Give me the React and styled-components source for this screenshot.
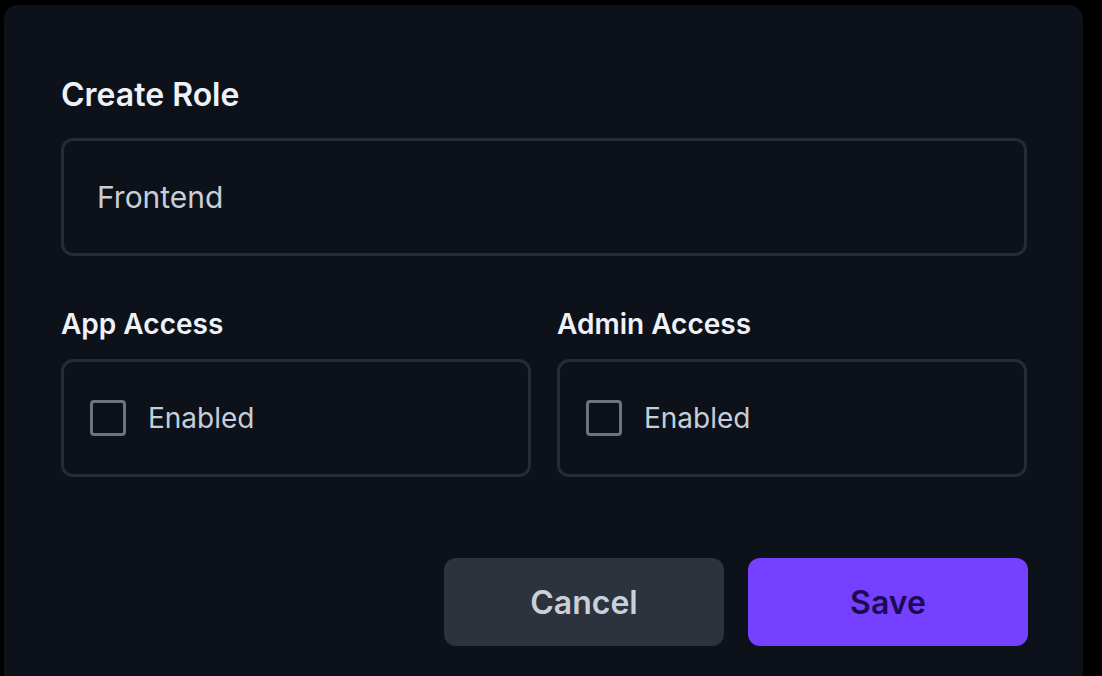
import styled, { createGlobalStyle } from "styled-components";
import { useState } from "react";

const GlobalStyle = createGlobalStyle`
html, body {
  margin : 0;
  padding : 0;
  background-color : #000000;
  font-family : Inter, "Noto Sans", sans-serif;
}
`

const Panel = styled.div`
margin : 5px 0 0 4px;
width : 1079px;
min-height : 671px;
box-sizing : border-box;
background-color : #0d1119;
border-radius : 14px 14px 0 0;
padding : 71px 56px 0 57px;
display : flex;
flex-direction : column;
`

const Title = styled.h2`
margin : 0 0 24px 0;
font-size : 32px;
line-height : 38px;
font-weight : 600;
color : #eef2f8;
`

const TextInput = styled.input`
box-sizing : border-box;
width : 100%;
height : 118px;
background-color : transparent;
border : 3px solid #262b34;
border-radius : 12px;
padding : 0 33px;
font-family : inherit;
font-size : 30px;
color : #c8ced8;
outline : none;
`

const AccessRow = styled.div`
display : grid;
grid-template-columns : 1fr 1fr;
gap : 26px;
margin-top : 50px;
`

const AccessColumn = styled.div`
display : flex;
flex-direction : column;
`

const Label = styled.div`
font-size : 28px;
line-height : 36px;
font-weight : 600;
color : #eef2f8;
margin-bottom : 17px;
`

const CheckboxBox = styled.label`
box-sizing : border-box;
height : 118px;
border : 3px solid #262b34;
border-radius : 12px;
padding : 0 26px;
display : flex;
align-items : center;
gap : 22px;
cursor : pointer;
font-size : 28px;
color : #c8ced8;
`

const Square = styled.span`
box-sizing : border-box;
width : 36px;
height : 36px;
border : 3px solid #6e727b;
border-radius : 4px;
background-color : ${props => props.$checked ? "#7540ff" : "transparent"};
`

const Actions = styled.div`
display : flex;
justify-content : flex-end;
gap : 24px;
margin-top : 81px;
margin-right : -1px;
`

const Button = styled.button`
width : 280px;
height : 88px;
border : none;
border-radius : 12px;
font-family : inherit;
font-size : 32px;
font-weight : 600;
cursor : pointer;
background-color : ${props => props.$primary ? "#7540ff" : "#2c333c"};
color : ${props => props.$primary ? "#1c0b52" : "#c9d0da"};
`

function AccessField ({label, checked, onToggle}) {
  return (
    <AccessColumn>
      <Label>{label}</Label>
      <CheckboxBox onClick={onToggle}>
        <Square $checked={checked} />
        <span>Enabled</span>
      </CheckboxBox>
    </AccessColumn>
  );
}

function App () {
  const [name, setName] = useState("Frontend");
  const [appAccess, setAppAccess] = useState(false);
  const [adminAccess, setAdminAccess] = useState(false);

  return (
    <>
      <GlobalStyle />
      <Panel>
        <Title>Create Role</Title>
        <TextInput value={name} onChange={(e) => setName(e.target.value)} />
        <AccessRow>
          <AccessField label="App Access" checked={appAccess} onToggle={() => setAppAccess(!appAccess)} />
          <AccessField label="Admin Access" checked={adminAccess} onToggle={() => setAdminAccess(!adminAccess)} />
        </AccessRow>
        <Actions>
          <Button>Cancel</Button>
          <Button $primary>Save</Button>
        </Actions>
      </Panel>
    </>
  );
}

export default App;
